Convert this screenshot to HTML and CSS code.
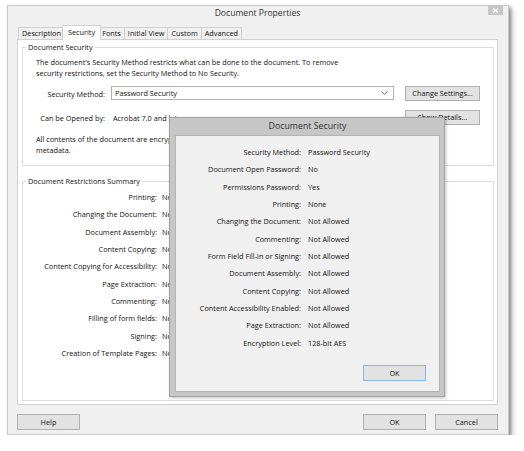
FILE: index.html
```html
<!DOCTYPE html>
<html lang="en">
<head>
<meta charset="utf-8">
<title>Document Properties</title>
<link rel="stylesheet" href="styles.css">
</head>
<body>
<div class="window">
  <div class="titlebar">
    <div class="title">Document Properties</div>
    <div class="close">
      <svg width="7" height="5" viewBox="0 0 7 5"><path d="M1 0.5 L6 4.5 M6 0.5 L1 4.5" stroke="#fff" stroke-width="1.3" fill="none"/></svg>
    </div>
  </div>
  <div class="tabs">
    <div class="tab">Description</div>
    <div class="tab active">Security</div>
    <div class="tab">Fonts</div>
    <div class="tab">Initial View</div>
    <div class="tab">Custom</div>
    <div class="tab">Advanced</div>
  </div>
  <div class="panel">
    <fieldset class="group security">
      <legend>Document Security</legend>
      <p class="note first">The document's Security Method restricts what can be done to the document. To remove<br>security restrictions, set the Security Method to No Security.</p>
      <div class="method">
        <div class="label">Security Method:</div>
        <div class="select"><span>Password Security</span>
          <svg width="7" height="4" viewBox="0 0 7 4"><path d="M0.5 0.5 L3.5 3.3 L6.5 0.5" stroke="#666" stroke-width="1" fill="none"/></svg>
        </div>
        <button class="btn wide">Change Settings...</button>
        <div class="label">Can be Opened by:</div>
        <div class="value">Acrobat 7.0 and later</div>
        <button class="btn wide">Show Details...</button>
      </div>
      <p class="note last">All contents of the document are encrypted and search engines cannot access the document's<br>metadata.</p>
    </fieldset>
    <fieldset class="group restrictions">
      <legend>Document Restrictions Summary</legend>
      <dl class="rows summary">
        <dt>Printing:</dt><dd>Not Allowed</dd>
        <dt>Changing the Document:</dt><dd>Not Allowed</dd>
        <dt>Document Assembly:</dt><dd>Not Allowed</dd>
        <dt>Content Copying:</dt><dd>Not Allowed</dd>
        <dt>Content Copying for Accessibility:</dt><dd>Not Allowed</dd>
        <dt>Page Extraction:</dt><dd>Not Allowed</dd>
        <dt>Commenting:</dt><dd>Not Allowed</dd>
        <dt>Filling of form fields:</dt><dd>Not Allowed</dd>
        <dt>Signing:</dt><dd>Not Allowed</dd>
        <dt>Creation of Template Pages:</dt><dd>Not Allowed</dd>
      </dl>
    </fieldset>
  </div>
  <div class="footer">
    <button class="btn">Help</button>
    <button class="btn ok">OK</button>
    <button class="btn cancel">Cancel</button>
  </div>

  <div class="popup">
    <div class="popup-title">Document Security</div>
    <div class="popup-body">
      <dl class="rows details">
        <dt>Security Method:</dt><dd>Password Security</dd>
        <dt>Document Open Password:</dt><dd>No</dd>
        <dt>Permissions Password:</dt><dd>Yes</dd>
        <dt>Printing:</dt><dd>None</dd>
        <dt>Changing the Document:</dt><dd>Not Allowed</dd>
        <dt>Commenting:</dt><dd>Not Allowed</dd>
        <dt>Form Field Fill-in or Signing:</dt><dd>Not Allowed</dd>
        <dt>Document Assembly:</dt><dd>Not Allowed</dd>
        <dt>Content Copying:</dt><dd>Not Allowed</dd>
        <dt>Content Accessibility Enabled:</dt><dd>Not Allowed</dd>
        <dt>Page Extraction:</dt><dd>Not Allowed</dd>
        <dt>Encryption Level:</dt><dd>128-bit AES</dd>
      </dl>
      <button class="btn default">OK</button>
    </div>
  </div>
</div>
</body>
</html>
```

FILE: styles.css
```css
* { box-sizing: border-box; }

body {
  margin: 0;
  background: #ffffff;
  font-family: "Open Sans", "Noto Sans", sans-serif;
  font-size: 7.3px;
  color: #111111;
}

.window {
  position: relative;
  width: 502px;
  height: 430px;
  margin: 5px 0 0 7px;
  padding: 0 10px 4px 9px;
  background: #f0f0f0;
  border: 1px solid #c9c9c9;
  box-shadow: 2px 2px 3px rgba(0, 0, 0, 0.35), 4px 4px 6px rgba(0, 0, 0, 0.18);
  display: flex;
  flex-direction: column;
}

/* title bar */
.titlebar {
  height: 19px;
  flex: none;
  display: grid;
  grid-template-columns: 1fr auto 1fr;
  align-items: start;
}
.title {
  grid-column: 2;
  font-size: 8.6px;
  line-height: 12px;
  padding-top: 1px;
  color: #333333;
}
.close {
  grid-column: 3;
  justify-self: end;
  width: 15px;
  height: 10px;
  margin: -1px -5px 0 0;
  background: #c7c7c7;
  display: flex;
  align-items: center;
  justify-content: center;
}
.close svg { display: block; }

/* tabs */
.tabs {
  height: 14px;
  flex: none;
  display: flex;
  align-items: flex-end;
  padding-left: 1px;
}
.tab {
  height: 12px;
  line-height: 11px;
  padding: 0 3px;
  margin-left: -1px;
  border: 1px solid #d0d0d0;
  border-bottom: 0;
  background: #f0f0f0;
  white-space: nowrap;
}
.tab:first-child { margin-left: 0; }
.tab.active {
  position: relative;
  z-index: 1;
  height: 15px;
  margin: 0 -2px -1px -3px;
  padding: 0 5px;
  line-height: 12px;
  background: #ffffff;
}

/* panel */
.panel {
  height: 366px;
  flex: none;
  background: #ffffff;
  border: 1px solid #d0d0d0;
  padding: 0 3px 3px 4px;
  display: flex;
  flex-direction: column;
}

.group {
  margin: 0;
  padding: 0 13px;
  min-width: 0;
  border: 1px solid #dcdcdc;
}
.group legend {
  padding: 0 2px;
  margin-left: -10px;
  line-height: 11px;
}

.security {
  margin-top: 1.5px;
  padding-bottom: 9.5px;
}
.note {
  margin: 0;
  line-height: 11px;
  white-space: nowrap;
}
.note.first { margin-top: 4px; }
.note.last { margin-top: 8.5px; }

.method {
  margin-top: 7.5px;
  display: grid;
  grid-template-columns: 69px 283px 80px;
  grid-auto-rows: 15px;
  column-gap: 6px;
  row-gap: 9px;
  align-items: center;
}
.method .label { text-align: right; white-space: nowrap; }
.method .value { padding-left: 2px; white-space: nowrap; }

.select {
  height: 14px;
  align-self: start;
  background: #ffffff;
  border: 1px solid #b1b1b1;
  display: flex;
  align-items: center;
  justify-content: space-between;
  padding: 0 5px 0 3px;
}
.select svg { display: block; }

.restrictions {
  margin-top: 9.5px;
  flex: 1;
}

.rows {
  margin: 0;
  display: grid;
  grid-auto-rows: 17.33px;
  align-items: center;
  white-space: nowrap;
}
.rows dt { text-align: right; }
.rows dd { margin: 0; }

.summary {
  margin-top: 1.8px;
  grid-template-columns: 121px 1fr;
  column-gap: 5px;
}

/* buttons */
.btn {
  width: 63px;
  height: 16px;
  padding: 0;
  font: inherit;
  line-height: 14px;
  color: #111111;
  background: #e2e2e2;
  border: 1px solid #b0b0b0;
  border-radius: 0;
}
.btn.wide {
  width: 75px;
  height: 15px;
  line-height: 13px;
  justify-self: end;
}
.btn.default { border-color: #86b7ec; }

.footer {
  flex: none;
  margin-top: 9px;
  display: flex;
}
.footer .ok { margin-left: auto; }
.footer .cancel { margin-left: 9px; }

/* overlay dialog */
.popup {
  position: absolute;
  left: 161px;
  top: 111px;
  width: 276px;
  height: 280px;
  padding: 0 4px 4px 5px;
  background: #c6c6c6;
  border: 1px solid #a2a2a2;
  box-shadow: 1px 1px 3px rgba(0, 0, 0, 0.25);
  display: flex;
  flex-direction: column;
}
.popup-title {
  height: 17px;
  flex: none;
  line-height: 17px;
  text-align: center;
  font-size: 8.8px;
  color: #333333;
}
.popup-body {
  flex: 1;
  background: #f0f0f0;
  border: 1px solid #b3b3b3;
  padding: 7.3px 13px 0 0;
  display: flex;
  flex-direction: column;
}
.details {
  grid-template-columns: 125px 1fr;
  column-gap: 7px;
}
.popup-body .btn {
  align-self: flex-end;
  margin-top: 13.7px;
}
```
